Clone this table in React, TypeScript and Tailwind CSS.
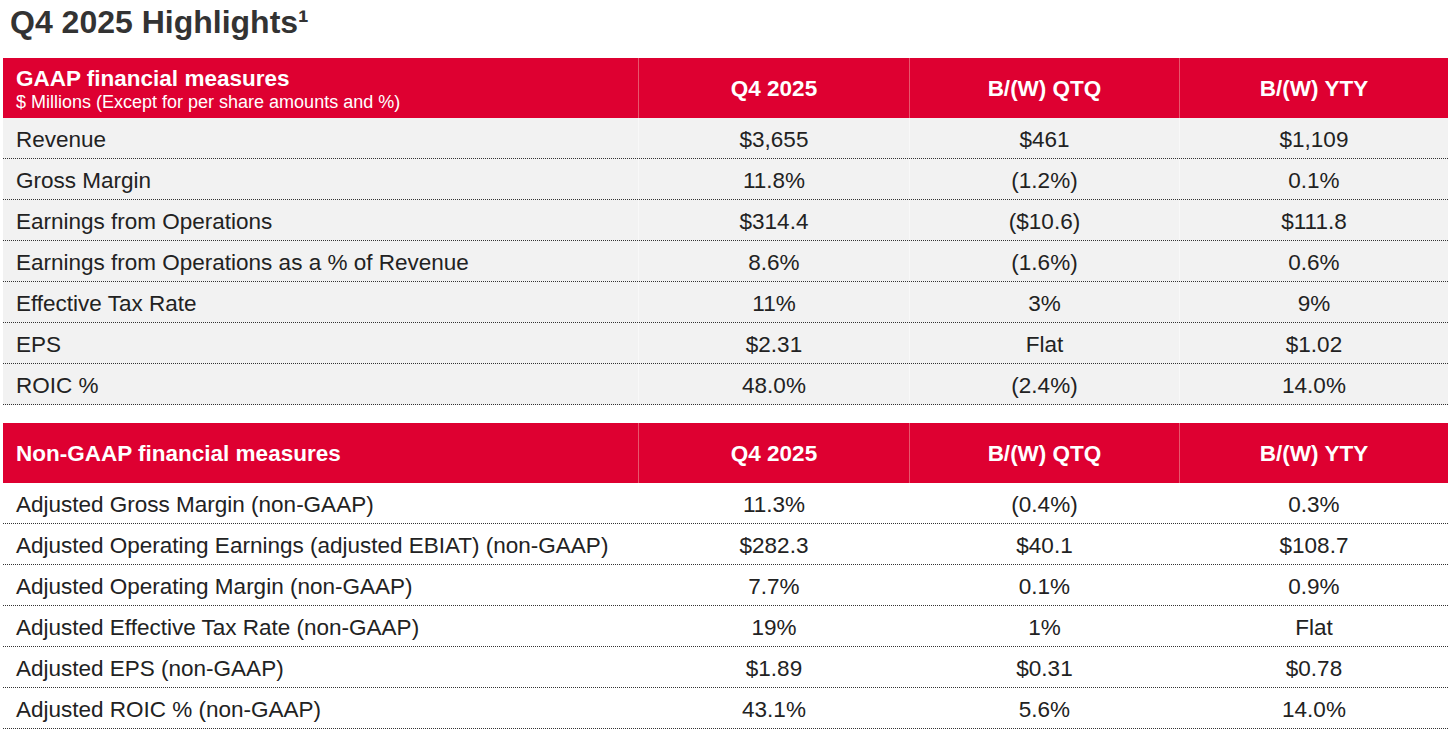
const gaapRows: [string, string, string, string][] = [
  ["Revenue", "$3,655", "$461", "$1,109"],
  ["Gross Margin", "11.8%", "(1.2%)", "0.1%"],
  ["Earnings from Operations", "$314.4", "($10.6)", "$111.8"],
  ["Earnings from Operations as a % of Revenue", "8.6%", "(1.6%)", "0.6%"],
  ["Effective Tax Rate", "11%", "3%", "9%"],
  ["EPS", "$2.31", "Flat", "$1.02"],
  ["ROIC %", "48.0%", "(2.4%)", "14.0%"],
];

const nonGaapRows: [string, string, string, string][] = [
  ["Adjusted Gross Margin (non-GAAP)", "11.3%", "(0.4%)", "0.3%"],
  ["Adjusted Operating Earnings (adjusted EBIAT) (non-GAAP)", "$282.3", "$40.1", "$108.7"],
  ["Adjusted Operating Margin (non-GAAP)", "7.7%", "0.1%", "0.9%"],
  ["Adjusted Effective Tax Rate (non-GAAP)", "19%", "1%", "Flat"],
  ["Adjusted EPS (non-GAAP)", "$1.89", "$0.31", "$0.78"],
  ["Adjusted ROIC % (non-GAAP)", "43.1%", "5.6%", "14.0%"],
];

const cols = "grid grid-cols-[635px_271px_270px_269px]";

function Header({ title, sub }: { title: string; sub?: string }) {
  return (
    <div className={`${cols} h-[60px] bg-[#de0031] text-white font-bold`}>
      <div className="flex flex-col justify-center pl-[13px] pt-[2px]">
        <div className="text-[22.5px] leading-[26px]">{title}</div>
        {sub && <div className="text-[18px] font-normal leading-[20px]">{sub}</div>}
      </div>
      {["Q4 2025", "B/(W) QTQ", "B/(W) YTY"].map((h) => (
        <div key={h} className="flex items-center justify-center border-l border-[#e8566c] pt-[2px] text-[22.5px]">
          {h}
        </div>
      ))}
    </div>
  );
}

function Row({ cells, gray }: { cells: [string, string, string, string]; gray: boolean }) {
  return (
    <div className={`${cols} h-[41px] border-b border-dotted border-[#333] ${gray ? "bg-[#f2f2f2]" : "bg-white"}`}>
      <div className="flex items-center pl-[13px] pt-[3px]">{cells[0]}</div>
      {cells.slice(1).map((c, i) => (
        <div key={i} className={`flex items-center justify-center border-l pt-[3px] ${gray ? "border-[#f8f8f8]" : "border-transparent"}`}>
          {c}
        </div>
      ))}
    </div>
  );
}

export default function App() {
  return (
    <div className="w-[1456px] h-[743px] bg-white font-['Liberation_Sans',Arial,sans-serif] text-[#222]">
      <h1 className="pl-[10px] pt-[6px] text-[32px] font-bold leading-[32px] text-[#333]">
        Q4 2025 Highlights¹
      </h1>
      <div className="ml-[3px] mt-[20px] w-[1445px] text-[22.5px]">
        <Header title="GAAP financial measures" sub="$ Millions (Except for per share amounts and %)" />
        {gaapRows.map((r) => (
          <Row key={r[0]} cells={r} gray />
        ))}
        <div className="h-[18px]" />
        <Header title="Non-GAAP financial measures" />
        {nonGaapRows.map((r) => (
          <Row key={r[0]} cells={r} gray={false} />
        ))}
      </div>
    </div>
  );
}
